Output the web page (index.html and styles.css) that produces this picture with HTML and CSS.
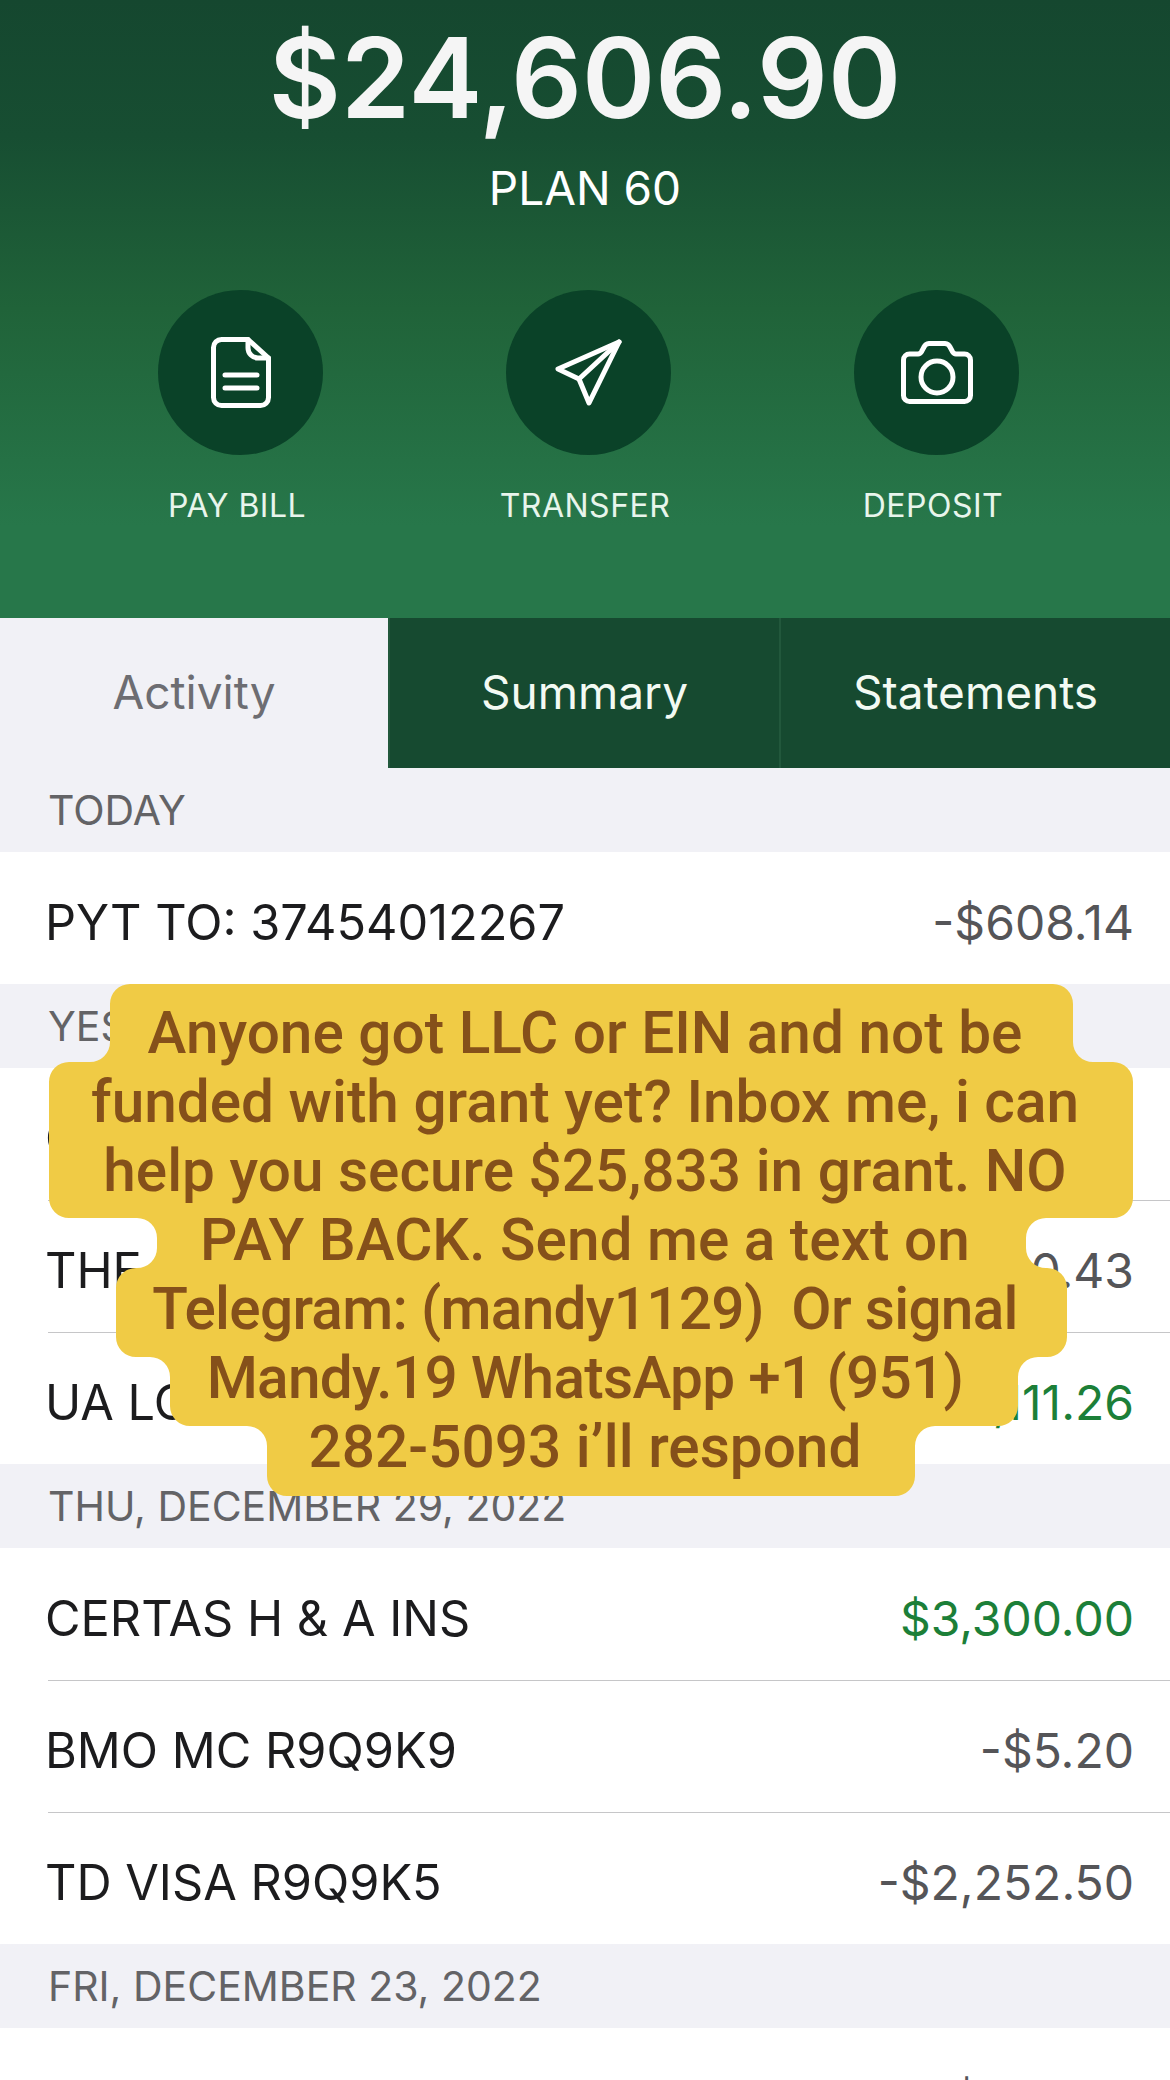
FILE: index.html
```html
<!DOCTYPE html>
<html>
  <head>
    <meta charset="utf-8" />
    <title>Account activity</title>
    <link rel="stylesheet" href="styles.css">
  </head>
  <body>
    <div class="page">
      <div class="account-header">
        <div class="balance">$24,606.90</div>
        <div class="plan-name">PLAN 60</div>
        <div class="actions">
          <div class="action">
            <div class="action-circle">
              <svg class="action-icon" width="60" height="71" viewBox="0 0 60 71">
                <path d="M10.500 2.500H37L57.500 21V60.500a8 8 0 0 1-8 8H10.500a8 8 0 0 1-8-8V10.500a8 8 0 0 1 8-8Z" />
                <path d="M37 2.500V11a10 10 0 0 0 10 10H57.500" />
                <path d="M14 38H46M14 51H46" />
              </svg>
            </div>
            <div class="action-label">PAY BILL</div>
          </div>
          <div class="action">
            <div class="action-circle">
              <svg class="action-icon" width="67" height="67" viewBox="0 0 67 67">
                <path d="M64 3L3 30L24 40L34 64Z" />
                <path d="M64 3L24 40" />
              </svg>
            </div>
            <div class="action-label">TRANSFER</div>
          </div>
          <div class="action">
            <div class="action-circle">
              <svg class="action-icon" width="72" height="63" viewBox="0 0 72 63">
                <path d="M8.500 13H17a4 4 0 0 0 3.300-2L23 6a6 6 0 0 1 5-3.500H44a6 6 0 0 1 5 3.500L51.700 11a4 4 0 0 0 3.300 2H63.500a6 6 0 0 1 6 6V54.500a6 6 0 0 1-6 6H8.500a6 6 0 0 1-6-6V19a6 6 0 0 1 6-6Z" />
                <circle cx="36" cy="36" r="16" />
              </svg>
            </div>
            <div class="action-label">DEPOSIT</div>
          </div>
        </div>
      </div>

      <div class="tabs">
        <div class="tab tab-active">Activity</div>
        <div class="tab">Summary</div>
        <div class="tab">Statements</div>
      </div>

      <div class="section-title">TODAY</div>
      <div class="row">
        <span class="row-name">PYT TO: 37454012267</span>
        <span class="row-amount">-$608.14</span>
      </div>

      <div class="section-title">YESTERDAY</div>
      <div class="row">
        <span class="row-name">C</span>
        <span class="row-amount">-$0.00</span>
      </div>
      <div class="row">
        <span class="row-name">THE</span>
        <span class="row-amount">-$0.43</span>
      </div>
      <div class="row">
        <span class="row-name">UA LO</span>
        <span class="row-amount amount-in">$1,111.26</span>
      </div>

      <div class="section-title">THU, DECEMBER 29, 2022</div>
      <div class="row">
        <span class="row-name">CERTAS H &amp; A INS</span>
        <span class="row-amount amount-in">$3,300.00</span>
      </div>
      <div class="row">
        <span class="row-name">BMO MC R9Q9K9</span>
        <span class="row-amount">-$5.20</span>
      </div>
      <div class="row">
        <span class="row-name">TD VISA R9Q9K5</span>
        <span class="row-amount">-$2,252.50</span>
      </div>

      <div class="section-title">FRI, DECEMBER 23, 2022</div>
      <div class="row">
        <span class="row-name">WINMACK C A S COURIER</span>
        <span class="row-amount">-$100.00</span>
      </div>

      <!-- caption sticker over the list -->
      <div class="sticker">
        <svg class="sticker-shape" viewBox="0 984 1170 512">
          <path d="M130 984H1053a20 20 0 0 1 20 20V1042a20 20 0 0 0 20 20H1113a20 20 0 0 1 20 20V1198a20 20 0 0 1-20 20H1046a20 20 0 0 0-20 20V1248a20 20 0 0 0 20 20H1047a20 20 0 0 1 20 20V1337a20 20 0 0 1-20 20H1038a20 20 0 0 0-20 20V1406a20 20 0 0 1-20 20H935a20 20 0 0 0-20 20V1476a20 20 0 0 1-20 20H287a20 20 0 0 1-20-20V1446a20 20 0 0 0-20-20H190a20 20 0 0 1-20-20V1377a20 20 0 0 0-20-20H136a20 20 0 0 1-20-20V1288a20 20 0 0 1 20-20H137a20 20 0 0 0 20-20V1238a20 20 0 0 0-20-20H69a20 20 0 0 1-20-20V1082a20 20 0 0 1 20-20H90a20 20 0 0 0 20-20V1004a20 20 0 0 1 20-20Z" />
        </svg>
        <div class="sticker-text">
          <div>Anyone got LLC or EIN and not be</div>
          <div>funded with grant yet? Inbox me, i can</div>
          <div>help you secure $25,833 in grant. NO</div>
          <div>PAY BACK. Send me a text on</div>
          <div class="line-tight">Telegram: (mandy1129)&nbsp; Or signal</div>
          <div class="line-tight">Mandy.19 WhatsApp +1 (951)</div>
          <div>282-5093 i’ll respond</div>
        </div>
      </div>
    </div>
  </body>
</html>
```

FILE: styles.css
```css
* {
  margin: 0;
  padding: 0;
  box-sizing: border-box;
}

html,
body {
  height: 2080px;
  overflow: hidden;
}

body {
  font-family: Inter, "Liberation Sans", sans-serif;
  background-color: #fff;
}

.page {
  position: relative;
  width: 1170px;
  height: 2080px;
  overflow: hidden;
}

/* green top part */
.account-header {
  height: 618px;
  padding-top: 10px;
  background: linear-gradient(180deg, #15472f 0%, #174e32 22%, #206339 50%, #27774a 85%, #27774a 100%);
  color: #fff;
  text-align: center;
}

.balance {
  font-size: 111px;
  font-weight: 600;
  line-height: 136px;
  color: #f5f5f5;
}

.plan-name {
  font-size: 46px;
  line-height: 56px;
  margin-top: 14px;
}

.actions {
  display: flex;
  justify-content: center;
  margin-top: 74px;
}

.action {
  width: 348px;
  display: flex;
  flex-direction: column;
  align-items: center;
}

.action-circle {
  width: 165px;
  height: 165px;
  margin-left: 7px;
  border-radius: 50%;
  background-color: #0a4228;
  display: flex;
  align-items: center;
  justify-content: center;
}

.action-icon {
  fill: none;
  stroke: #fff;
  stroke-width: 5;
  stroke-linecap: round;
  stroke-linejoin: round;
}

.action-label {
  font-size: 32px;
  line-height: 40px;
  margin-top: 31px;
  letter-spacing: 0.5px;
  color: #e8f5ec;
}

/* tabs */
.tabs {
  display: flex;
  height: 150px;
}

.tab {
  flex: 1;
  padding-bottom: 3px;
  display: flex;
  align-items: center;
  justify-content: center;
  font-size: 46px;
  color: #f3faf3;
  background-color: #164a30;
  border-left: 2px solid #22583c;
}

.tab-active {
  flex: 0 0 388px;
  color: #6d6d72;
  background-color: #f1f1f6;
  border-left: 0;
}

/* list */
.section-title {
  height: 84px;
  padding-left: 48px;
  display: flex;
  align-items: center;
  font-size: 41px;
  color: #636366;
  background-color: #f1f1f6;
}

.row {
  height: 132px;
  margin-left: 48px;
  padding: 8px 36px 0 0;
  display: flex;
  align-items: center;
  justify-content: space-between;
  font-size: 48.700px;
}

.row + .row {
  border-top: 1px solid #c6c6c8;
}

.row-name {
  margin-left: -3px;
  color: #1c1c1e;
}

.row-amount {
  font-size: 48px;
  color: #555558;
}

.amount-in {
  color: #1c7f38;
}

/* sticker */
.sticker {
  position: absolute;
  left: 0;
  top: 984px;
  width: 1170px;
  height: 512px;
}

.sticker-shape {
  position: absolute;
  left: 0;
  top: 0;
  width: 1170px;
  height: 512px;
  fill: #f0cb45;
}

.sticker-text {
  position: relative;
  padding-top: 15px;
  text-align: center;
  font-family: Roboto, "Liberation Sans", sans-serif;
  font-size: 58.500px;
  font-weight: 500;
  line-height: 69px;
  color: #85501a;
}

.line-tight {
  letter-spacing: -0.700px;
}
```
